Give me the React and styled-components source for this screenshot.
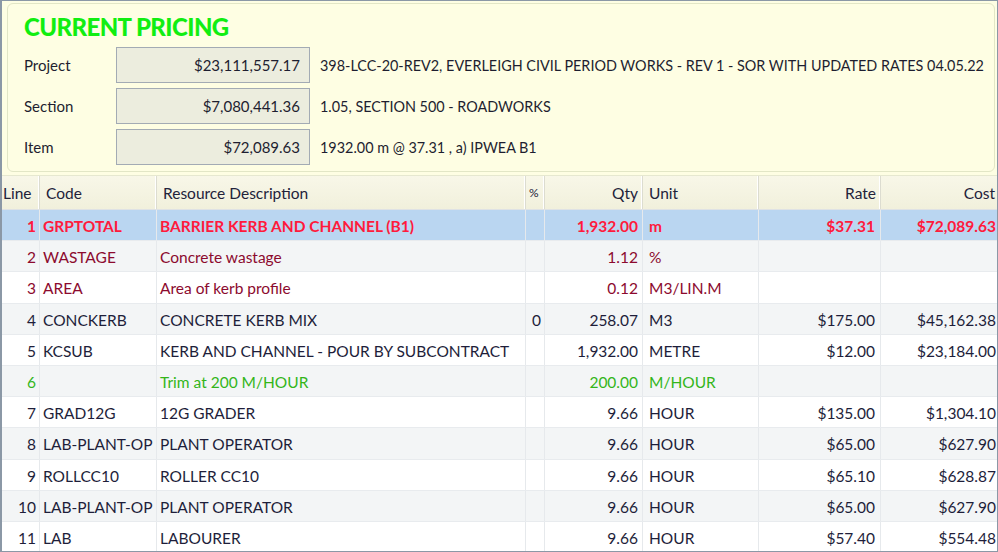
import React from 'react'
import styled, { createGlobalStyle } from 'styled-components'

const GlobalStyle = createGlobalStyle`
  html, body { margin: 0; padding: 0; background: #fff; }
  body { font-family: Lato, "Noto Sans", sans-serif; }
`

const info = [
  { label: 'Project', value: '$23,111,557.17', text: '398-LCC-20-REV2, EVERLEIGH CIVIL PERIOD WORKS - REV 1 - SOR WITH UPDATED RATES 04.05.22' },
  { label: 'Section', value: '$7,080,441.36', text: '1.05, SECTION 500 - ROADWORKS' },
  { label: 'Item', value: '$72,089.63', text: '1932.00 m @ 37.31 , a) IPWEA B1' },
]

const cols = [
  { key: 'line', title: 'Line', w: 38, align: 'right' },
  { key: 'code', title: 'Code', w: 117 },
  { key: 'desc', title: 'Resource Description', w: 369 },
  { key: 'pct', title: '%', w: 19 },
  { key: 'qty', title: 'Qty', w: 98, align: 'right' },
  { key: 'unit', title: 'Unit', w: 116 },
  { key: 'rate', title: 'Rate', w: 122, align: 'right' },
  { key: 'cost', title: 'Cost', w: 117, align: 'right' },
]

const rows = [
  { line: 1, code: 'GRPTOTAL', desc: 'BARRIER KERB AND CHANNEL (B1)', qty: '1,932.00', unit: 'm', rate: '$37.31', cost: '$72,089.63', tone: 'total' },
  { line: 2, code: 'WASTAGE', desc: 'Concrete wastage', qty: '1.12', unit: '%', tone: 'factor' },
  { line: 3, code: 'AREA', desc: 'Area of kerb profile', qty: '0.12', unit: 'M3/LIN.M', tone: 'factor' },
  { line: 4, code: 'CONCKERB', desc: 'CONCRETE KERB MIX', pct: '0', qty: '258.07', unit: 'M3', rate: '$175.00', cost: '$45,162.38' },
  { line: 5, code: 'KCSUB', desc: 'KERB AND CHANNEL - POUR BY SUBCONTRACT', qty: '1,932.00', unit: 'METRE', rate: '$12.00', cost: '$23,184.00' },
  { line: 6, code: '', desc: 'Trim at 200 M/HOUR', qty: '200.00', unit: 'M/HOUR', tone: 'note' },
  { line: 7, code: 'GRAD12G', desc: '12G GRADER', qty: '9.66', unit: 'HOUR', rate: '$135.00', cost: '$1,304.10' },
  { line: 8, code: 'LAB-PLANT-OP', desc: 'PLANT OPERATOR', qty: '9.66', unit: 'HOUR', rate: '$65.00', cost: '$627.90' },
  { line: 9, code: 'ROLLCC10', desc: 'ROLLER CC10', qty: '9.66', unit: 'HOUR', rate: '$65.10', cost: '$628.87' },
  { line: 10, code: 'LAB-PLANT-OP', desc: 'PLANT OPERATOR', qty: '9.66', unit: 'HOUR', rate: '$65.00', cost: '$627.90' },
  { line: 11, code: 'LAB', desc: 'LABOURER', qty: '9.66', unit: 'HOUR', rate: '$57.40', cost: '$554.48' },
]

const toneColor = {
  total: '#ff1a3c',
  factor: '#8c0a2e',
  note: '#33b51a',
  normal: '#1e1e3a',
}

export default function App() {
  return (
    <>
      <GlobalStyle />
      <Frame>
        <TopPanel>
          <Card>
            <Title>CURRENT PRICING</Title>
            <InfoGrid>
              {info.map((r) => (
                <React.Fragment key={r.label}>
                  <Label>{r.label}</Label>
                  <ValueBox>{r.value}</ValueBox>
                  <InfoText>{r.text}</InfoText>
                </React.Fragment>
              ))}
            </InfoGrid>
          </Card>
        </TopPanel>
        <Grid>
          <HeaderRow>
            {cols.map((c) => (
              <HeadCell key={c.key} $align={c.align}>
                {c.key === 'pct' ? <PctMark>%</PctMark> : c.title}
              </HeadCell>
            ))}
          </HeaderRow>
          {rows.map((r, i) => (
            <Row key={r.line} $selected={r.tone === 'total'} $alt={i % 2 === 1}>
              {cols.map((c) => (
                <Cell
                  key={c.key}
                  $align={c.align}
                  $col={c.key}
                  $bold={r.tone === 'total'}
                  $color={toneColor[r.tone || 'normal']}
                >
                  {r[c.key]}
                </Cell>
              ))}
            </Row>
          ))}
        </Grid>
      </Frame>
    </>
  )
}

const Frame = styled.div`
  width: 998px;
  height: 552px;
  box-sizing: border-box;
  border: 1px solid #8b98a6;
  border-left-width: 2px;
  overflow: hidden;
  display: flex;
  flex-direction: column;
  background: #fff;
`

const TopPanel = styled.div`
  height: 175px;
  flex: none;
  box-sizing: border-box;
  background: #fefee3;
  padding: 2px 2px 3px 5px;
  border-bottom: 1px solid #e6e8d0;
`

const Card = styled.div`
  height: 100%;
  box-sizing: border-box;
  border: 1px solid #e2e6c6;
  border-radius: 6px;
  padding: 8px 0 0 16px;
`

const Title = styled.div`
  font-family: Lato, "Noto Sans", sans-serif;
  font-weight: 900;
  font-size: 24px;
  line-height: 30px;
  color: #11ee11;
  letter-spacing: -0.6px;
`

const InfoGrid = styled.div`
  display: grid;
  grid-template-columns: 92px 194px 1fr;
  grid-auto-rows: 36px;
  row-gap: 5px;
  margin-top: 5px;
  align-items: center;
`

const Label = styled.div`
  font-size: 15px;
  color: #1e1e30;
`

const ValueBox = styled.div`
  height: 36px;
  box-sizing: border-box;
  background: #ecedde;
  border: 1px solid #a3abb4;
  display: flex;
  align-items: center;
  justify-content: flex-end;
  padding-right: 9px;
  font-size: 15px;
  color: #1e1e30;
`

const InfoText = styled.div`
  padding-left: 10px;
  font-size: 14.4px;
  color: #1e1e30;
  white-space: nowrap;
`

const Grid = styled.div`
  flex: none;
  display: flex;
  flex-direction: column;
`

const HeaderRow = styled.div`
  display: grid;
  grid-template-columns: ${cols.map((c) => c.w + 'px').join(' ')};
  height: 34px;
  flex: none;
  box-sizing: border-box;
  background: linear-gradient(#f8f7e8, #f1f0dc);
  border-bottom: 1px solid #dfe2e4;
`

const HeadCell = styled.div`
  display: flex;
  align-items: center;
  justify-content: ${(p) => (p.$align === 'right' ? 'flex-end' : 'flex-start')};
  padding: ${(p) => (p.$align === 'right' ? '0 4px 0 0' : '0 0 0 6px')};
  font-size: 15.5px;
  color: #22223a;
  border-right: 1px solid #dcdcd0;
  box-shadow: inset -1px 0 0 #ffffff;
  overflow: hidden;
  white-space: nowrap;
  &:first-child { padding-left: 1px; justify-content: flex-start; }
  &:last-child { border-right: none; box-shadow: none; padding-right: 3px; }
`

const PctMark = styled.span`
  margin-left: -3px;
  font-size: 12px;
`

const Row = styled.div`
  display: grid;
  grid-template-columns: ${cols.map((c) => c.w + 'px').join(' ')};
  height: 31.2px;
  flex: none;
  box-sizing: border-box;
  border-bottom: 1px solid #e8ebee;
  background: ${(p) => (p.$selected ? '#bad6f1' : p.$alt ? '#f3f5f6' : '#ffffff')};
`

const pads = {
  line: '2px 3px 0 0',
  code: '2px 0 0 3px',
  desc: '2px 0 0 3px',
  pct: '2px 0 0 6px',
  qty: '2px 4px 0 0',
  unit: '2px 0 0 6px',
  rate: '2px 5px 0 0',
  cost: '2px 2px 0 0',
}

const Cell = styled.div`
  display: flex;
  align-items: center;
  justify-content: ${(p) => (p.$align === 'right' ? 'flex-end' : 'flex-start')};
  padding: ${(p) => pads[p.$col]};
  font-size: 15.5px;
  font-weight: ${(p) => (p.$bold ? 700 : 400)};
  color: ${(p) => p.$color};
  border-right: 1px solid #e6e9ec;
  white-space: nowrap;
  overflow: hidden;
  &:last-child { border-right: none; }
`
